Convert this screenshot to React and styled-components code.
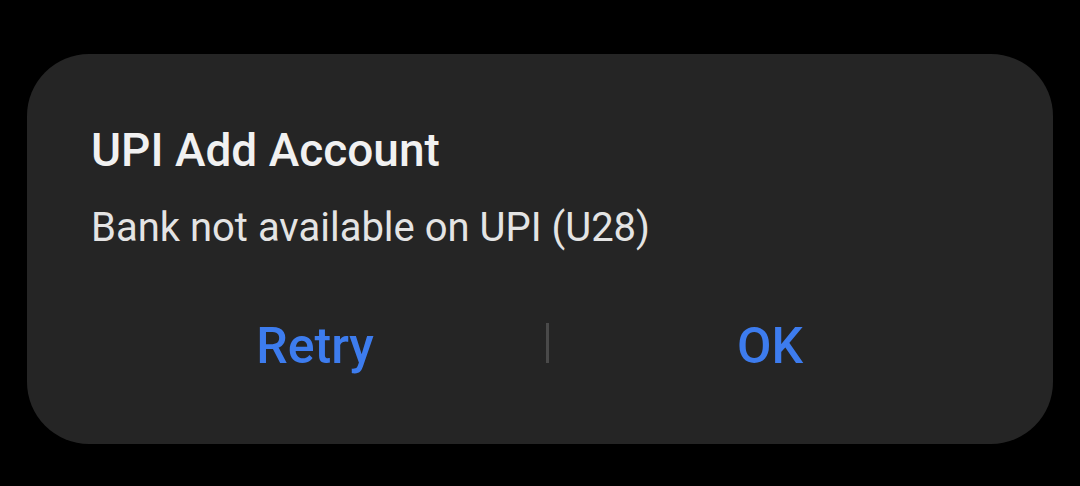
import styled, { createGlobalStyle } from "styled-components";

const GlobalStyle = createGlobalStyle`
  html, body {
    margin: 0;
    background: #000;
  }
  body {
    font-family: Roboto, "Noto Sans", "Liberation Sans", sans-serif;
  }
`;

const Screen = styled.div`
  width: 1080px;
  height: 486px;
  padding: 54px 27px 0;
  box-sizing: border-box;
  background: #000;
`;

const Dialog = styled.div`
  height: 390px;
  box-sizing: border-box;
  padding: 69px 57px 0 62px;
  background: #252525;
  border-radius: 62px;
  display: flex;
  flex-direction: column;
`;

const Title = styled.h2`
  margin: 0 0 0 2px;
  font-size: 46px;
  line-height: 54px;
  font-weight: 500;
  color: #f1f1f1;
`;

const Message = styled.p`
  margin: 28px 0 0 2px;
  font-size: 40px;
  line-height: 46px;
  font-weight: 400;
  color: #e4e4e4;
`;

const Actions = styled.div`
  margin-top: 65px;
  display: flex;
  align-items: center;
`;

const ActionButton = styled.button`
  flex: 1;
  padding: 0;
  border: 0;
  background: transparent;
  font-family: inherit;
  font-size: 50px;
  line-height: 60px;
  font-weight: 500;
  color: #3d7cee;
  cursor: pointer;
`;

const Divider = styled.span`
  width: 3px;
  height: 40px;
  background: #4a4a4a;
  margin-top: -6px;
  transform: translateX(5px);
`;

export default function App() {
  return (
    <>
      <GlobalStyle />
      <Screen>
        <Dialog>
          <Title>UPI Add Account</Title>
          <Message>Bank not available on UPI (U28)</Message>
          <Actions>
            <ActionButton>Retry</ActionButton>
            <Divider />
            <ActionButton>OK</ActionButton>
          </Actions>
        </Dialog>
      </Screen>
    </>
  );
}
